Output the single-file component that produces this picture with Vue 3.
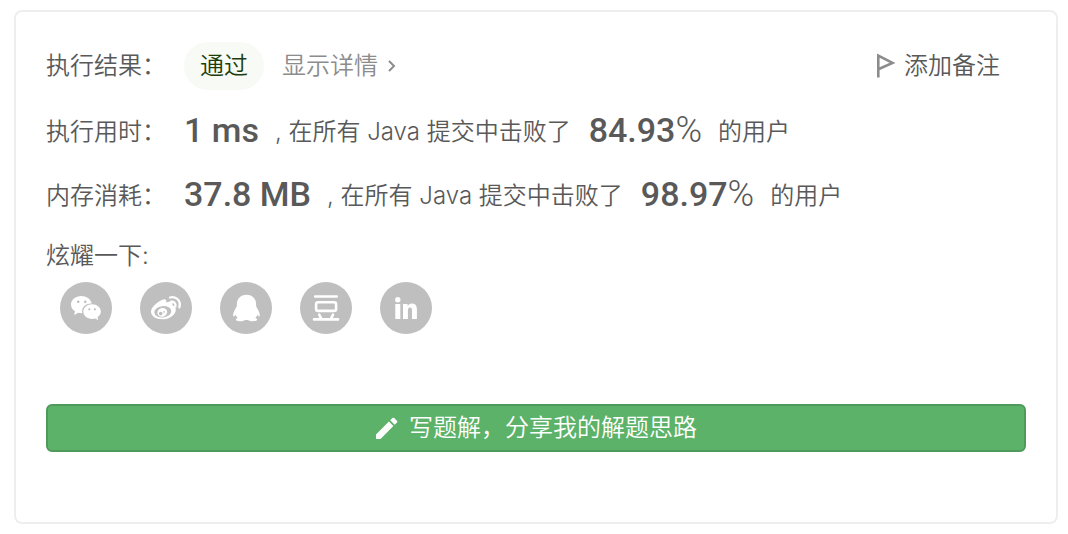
<script setup>
const stats = [
  { label: '执行用时：', value: '1 ms', percent: '84.93' },
  { label: '内存消耗：', value: '37.8 MB', percent: '98.97' },
]
</script>

<template>
  <main class="card">
    <div class="row result">
      <span class="label">执行结果：</span>
      <span class="tag">通过</span>
      <a class="details" href="#">
        显示详情
        <svg width="8" height="14" viewBox="0 0 8 14" fill="none" stroke="currentColor" stroke-width="2" aria-hidden="true">
          <path d="M1 2l5 5-5 5" />
        </svg>
      </a>
      <button class="note" type="button">
        <svg width="20" height="26" viewBox="0 0 20 26" fill="none" stroke="#8c8c8c" stroke-width="2.6" aria-hidden="true">
          <path d="M2.300 24.500V2.600L16.500 9.900L2.300 16.300" />
        </svg>
        添加备注
      </button>
    </div>

    <div v-for="s in stats" :key="s.label" class="row stat">
      <span class="label">{{ s.label }}</span>
      <span class="figure">{{ s.value }}</span>
      <span class="text">, 在所有 Java 提交中击败了</span>
      <span class="figure">{{ s.percent }}<span class="unit">%</span></span>
      <span class="text">的用户</span>
    </div>

    <div class="row share-title">炫耀一下:</div>
    <div class="share">
      <button class="round" type="button" aria-label="微信">
        <svg viewBox="0 0 52 52" aria-hidden="true">
          <path fill="#fff" d="M21.300 14C15.500 14 11 17.700 11 22.600c0 2.900 1.500 5.200 4 6.700l-.9 3.600 4.200-2.200c1.300.3 2.700.5 4.100.4C20.900 25.500 25.700 21 31.700 21.400 30.600 17 26.400 14 21.300 14z" />
          <path fill="#fff" d="M32.100 22.200c-4.900 0-8.800 3.300-8.800 7.400s3.900 7.400 8.800 7.400c1.100 0 2.200-.2 3.200-.5l3 1.700-.8-2.900c2.100-1.300 3.400-3.400 3.400-5.700 0-4.100-3.900-7.400-8.800-7.400z" />
          <g fill="#bfbfbf">
            <circle cx="18.200" cy="19.700" r="1.300" /><circle cx="25.200" cy="19.700" r="1.300" />
            <circle cx="29.300" cy="27.300" r="1.100" /><circle cx="34.900" cy="27.300" r="1.100" />
          </g>
        </svg>
      </button>
      <button class="round" type="button" aria-label="微博">
        <svg viewBox="0 0 52 52" aria-hidden="true">
          <path fill="#fff" d="M21.500 18.300c2.900-1.700 5.300-1.300 4.700 2.200 3.900-1.500 7.200-1 6.200 2.800 2.600.9 3.800 2.700 3.400 5.100-.9 5-6.900 8.900-13.500 8.900-6.500 0-11.300-3.100-11.300-7.500 0-4.100 5-9 10.500-11.500z" />
          <ellipse cx="22.800" cy="29.800" rx="8.500" ry="5.700" transform="rotate(-7 22.800 29.800)" fill="#bfbfbf" />
          <ellipse cx="22.300" cy="30.400" rx="5" ry="4.300" transform="rotate(-20 22.300 30.400)" fill="#fff" />
          <circle cx="20.700" cy="31.600" r="1.800" fill="#bfbfbf" />
          <circle cx="24" cy="29.900" r=".8" fill="#bfbfbf" />
          <path d="M30 15.500c6-1.700 11.300 3.200 9.400 9.800M30.700 19.900c3.200-.7 5.400 1.500 4.700 4.500" fill="none" stroke="#fff" stroke-width="2.300" stroke-linecap="round" />
        </svg>
      </button>
      <button class="round" type="button" aria-label="QQ">
        <svg viewBox="0 0 52 52" aria-hidden="true">
          <path fill="#fff" d="M26.500 12.800c-6 0-9.900 4.300-9.600 10.200.1 1.600-.9 2.400-1.700 4.200-1.400 2.600-2.700 5.300-1.800 7.100.5.700 1.400-.3 2.300-1.500.3 1.300 1 2.400 2 3.300-1.800.5-2.300 1.800-1.200 2.500 1.900 1.100 6.800.9 8.700-.5h2.700c1.900 1.400 6.600 1.600 8.600.5 1.300-.8.600-2-1.200-2.500.9-.9 1.600-2 2-3.300.8 1.200 1.800 2.100 2.200 1.400.8-2-.4-4.700-1.800-7-.9-1.700-1.700-2.600-1.600-4.200.3-5.900-3.600-10.200-9.600-10.200z" />
        </svg>
      </button>
      <button class="round" type="button" aria-label="豆瓣">
        <svg viewBox="0 0 52 52" fill="none" stroke="#fff" stroke-width="2.600" stroke-linecap="round" aria-hidden="true">
          <path d="M15.200 14.500h21.500M14 37.400h24" />
          <rect x="16.100" y="20.300" width="20" height="8.600" rx="2" />
          <path d="M19.200 32.700l2 4M33 32.700l-2 4" />
        </svg>
      </button>
      <button class="round" type="button" aria-label="LinkedIn">
        <svg viewBox="0 0 52 52" fill="#fff" aria-hidden="true">
          <circle cx="17.800" cy="17.800" r="2.700" />
          <rect x="15.300" y="22" width="5" height="15" />
          <path d="M23 22h4.600v2.100c1-1.600 2.400-2.500 4.400-2.500 3.300 0 4.900 2.100 4.900 6V37h-4.900v-8.500c0-2.100-.5-3.100-1.900-3.100-1.500 0-2.200 1.200-2.200 3.100V37H23z" />
        </svg>
      </button>
    </div>

    <button class="write" type="button">
      <svg width="24" height="24" viewBox="0 0 24 24" fill="#fff" aria-hidden="true">
        <path d="M1 18.500V23h4.500L18.400 10.100l-4.500-4.500zM21.900 6.600c.6-.6.600-1.300 0-1.900l-2.600-2.600c-.6-.6-1.300-.6-1.900 0l-2.200 2.200 4.500 4.500z" />
      </svg>
      写题解，分享我的解题思路
    </button>
  </main>
</template>

<style>
body {
  margin: 0;
  background: #fff;
}
</style>

<style scoped>
.card {
  margin: 10px 10px 10px 14px;
  padding: 30px 30px 70px;
  border: 2px solid #eee;
  border-radius: 8px;
  color: #595959;
  font: 350 24px/32px Inter, "Noto Sans CJK SC", sans-serif;
}
button {
  padding: 0;
  border: 0;
  background: none;
  color: inherit;
  font: inherit;
  cursor: pointer;
}
.row {
  display: flex;
  align-items: center;
  white-space: nowrap;
}
.result {
  height: 48px;
  margin-bottom: 8px;
}
.label {
  width: 138px;
}
.tag {
  padding: 8px 16px;
  border-radius: 24px;
  background: #f7faf5;
  color: #1c3d0c;
}
.details {
  display: flex;
  align-items: center;
  gap: 10px;
  margin-left: 18px;
  color: #8c8c8c;
  text-decoration: none;
}
.note {
  display: flex;
  align-items: center;
  gap: 8px;
  margin-left: auto;
  margin-right: 26px;
}
.stat {
  height: 64px;
}
.stat .label,
.stat .text {
  padding-top: 4px;
}
.figure {
  margin-right: 16px;
  font-family: Roboto, sans-serif;
  font-size: 34px;
  font-weight: 500;
}
.text {
  margin-right: 18px;
}
.unit {
  font-size: 36px;
  font-weight: 300;
}
.share-title {
  height: 52px;
  padding-top: 4px;
}
.share {
  display: flex;
  gap: 28px;
  padding-left: 14px;
}
.round {
  width: 52px;
  height: 52px;
  border-radius: 50%;
  background: #bfbfbf;
}
.round svg {
  display: block;
}
.write {
  display: flex;
  align-items: center;
  justify-content: center;
  gap: 10px;
  width: 100%;
  height: 48px;
  margin-top: 70px;
  border: 2px solid #4f9a5b;
  border-radius: 6px;
  background: #5cb268;
  color: #fff;
}
</style>
